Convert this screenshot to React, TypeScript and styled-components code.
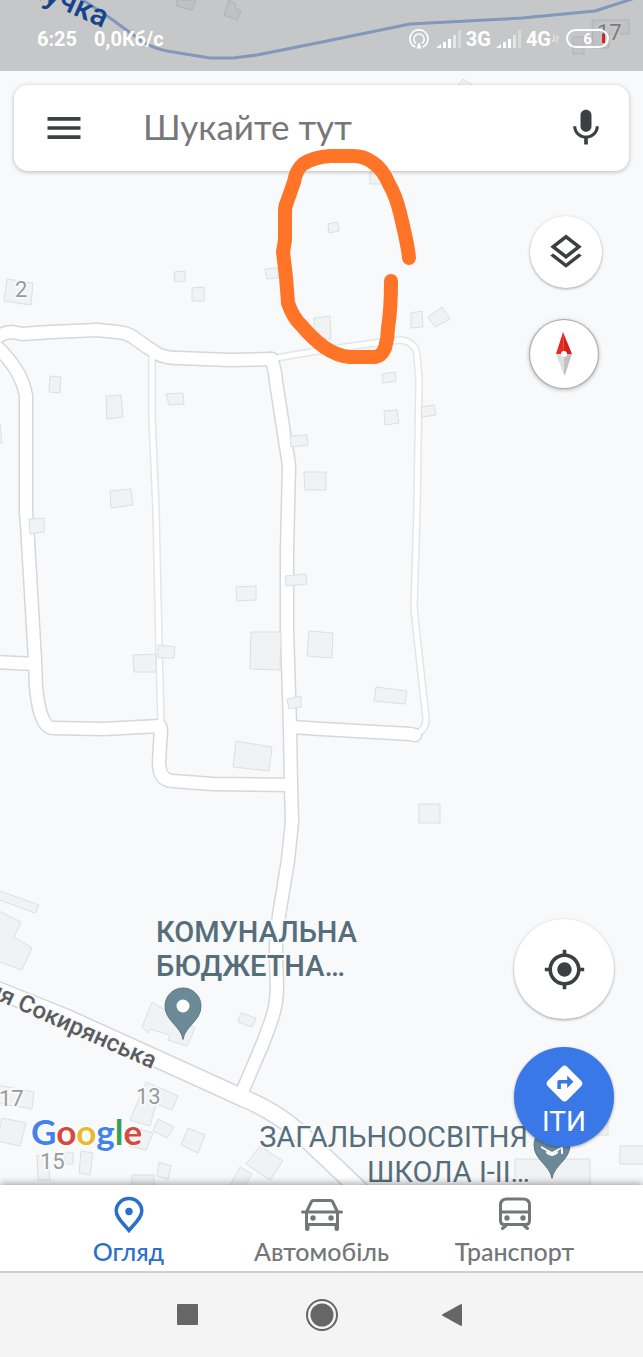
import React from "react";
import styled, { createGlobalStyle } from "styled-components";
import { MdDirections, MdMenu, MdMic, MdMyLocation, MdOutlineLayers } from "react-icons/md";

const GlobalStyle = createGlobalStyle`
  *, *::before, *::after { box-sizing: border-box; }
  body { margin: 0; background: #f8f9fb; font-family: Roboto, "Noto Sans", sans-serif; }
  button, input { font: inherit; }
`;

const Screen = styled.div`
  display: flex;
  flex-direction: column;
  min-height: 100vh;
`;

const MapArea = styled.main`
  position: relative;
  flex: 1;
  display: flex;
  flex-direction: column;
  overflow: hidden;
  background: #f8f9fb;
`;

const Canvas = styled.svg`
  position: absolute;
  inset: 0;
  width: 100%;
  height: 100%;
  display: block;
`;

const Annotation = styled(Canvas)`
  pointer-events: none;
`;

const StatusBar = styled.header`
  position: relative;
  display: flex;
  align-items: center;
  justify-content: space-between;
  height: 71px;
  padding: 6px 34px 0 37px;
  background: rgba(0, 0, 0, 0.2);
  color: #fff;
  font-size: 20px;
  line-height: 24px;
  font-weight: 700;
`;

const StatusGroup = styled.div<{ $gap: number }>`
  display: flex;
  align-items: center;
  gap: ${(p) => p.$gap}px;
`;

const Battery = styled.span`
  position: relative;
  display: flex;
  align-items: center;
  justify-content: center;
  width: 43px;
  height: 19px;
  border: 2px solid #fff;
  border-radius: 10px;
  font-size: 15px;
  line-height: 16px;

  &::after {
    content: "";
    position: absolute;
    right: 2px;
    top: 3px;
    width: 3px;
    height: 9px;
    background: #d3202a;
  }
`;

const SearchBar = styled.form`
  position: relative;
  display: flex;
  align-items: center;
  height: 86px;
  margin: 14px 14px 0;
  padding: 0 21px 0 28px;
  background: #fff;
  border-radius: 14px;
  box-shadow: 0 1px 4px rgba(60, 64, 67, 0.35);
`;

const IconButton = styled.button`
  display: flex;
  align-items: center;
  justify-content: center;
  flex: none;
  padding: 0;
  border: 0;
  background: none;
  color: #3c4043;
`;

const SearchInput = styled.input`
  flex: 1;
  min-width: 0;
  height: 48px;
  margin-left: 57px;
  padding: 0 0 4px;
  border: 0;
  outline: 0;
  background: none;
  color: #202124;
  font-family: Lato, "Noto Sans", sans-serif;
  font-size: 35px;

  &::placeholder { color: #757779; opacity: 1; }
`;

const TopControls = styled.div`
  position: relative;
  align-self: flex-end;
  display: flex;
  flex-direction: column;
  gap: 32px;
  margin: 45px 41px 0 0;
`;

const BottomControls = styled.div`
  position: relative;
  align-self: flex-end;
  display: flex;
  flex-direction: column;
  gap: 28px;
  margin: auto 29px 38px 0;
`;

const RoundButton = styled(IconButton)<{ $size: number; $outlined?: boolean; $primary?: boolean }>`
  flex-direction: column;
  width: ${(p) => p.$size}px;
  height: ${(p) => p.$size}px;
  padding-top: ${(p) => (p.$primary ? 6 : 0)}px;
  border-radius: 50%;
  background: ${(p) => (p.$primary ? "#3b78e7" : "#fff")};
  color: ${(p) => (p.$primary ? "#fff" : "#3c4043")};
  box-shadow: ${(p) =>
    p.$outlined
      ? "0 0 0 1px #a9a9a9, 0 1px 5px rgba(0, 0, 0, 0.4)"
      : "0 1px 3px rgba(0, 0, 0, 0.35)"};
  font-size: 28px;
  line-height: 34px;
`;

const TabBar = styled.nav`
  position: relative;
  display: grid;
  grid-template-columns: repeat(3, 1fr);
  height: 88px;
  padding: 0 32px;
  background: #fff;
  border-bottom: 2px solid #cfcfcf;
  box-shadow: 0 -1px 8px rgba(0, 0, 0, 0.4);
`;

const Tab = styled.button<{ $active?: boolean }>`
  display: flex;
  flex-direction: column;
  align-items: center;
  gap: 1px;
  padding: 10px 0 0;
  border: 0;
  background: none;
  color: ${(p) => (p.$active ? "#2a6fcb" : "#747678")};
  font-family: Lato, "Noto Sans", sans-serif;
  font-size: 25px;
  line-height: 30px;
  font-weight: 500;
`;

const SystemBar = styled.footer`
  position: relative;
  display: flex;
  align-items: center;
  justify-content: center;
  gap: 98px;
  height: 84px;
  background: #f4f4f4;
`;

const SystemButton = styled(IconButton)`
  width: 34px;
  height: 34px;
  color: #666;
`;

const ROADS = [
  "M-6 340Q2 332 13 332L22 334L50 332L97 330L117 332Q127 333 133 337L147 347L158 354Q166 358 178 358L230 360L272 359",
  "M-4 346Q22 370 26 396V512L27 524L35 660L36 687Q40 728 53 728L103 729L160 726",
  "M-4 662L34 664",
  "M161 729L159 762Q159 780 172 781L213 784L291 785",
  "M271 359Q275 368 276 382L283 427L289 465L287 550L287 630L290 727L291 787L292 822L288 860L282 897Q275 935 276 960L277 985Q277 1006 270 1024L263 1043L243 1090",
  "M291 727L322 729L410 734L415 735",
];

const LANES = [
  "M152 356V417L156 510L159 647L161 724",
  "M276 358L317 351L375 343L400 340Q415 341 417 355L419 380L417 510L414 607L417 637L426 718Q427 729 415 735",
];

const STREET = "M-8 988L67 1018L197 1077L243 1098Q275 1111 300 1133L360 1190";

const BUILDINGS = [
  "176 0L196 0L192 10L177 6Z",
  "229 0L236 4L235 8L241 11L237 20L224 15Z",
  "592 20H629V34H609V48H593Z",
  "573 37H584V54H573Z",
  "457 86L463 79L472 85V90H457Z",
  "7 279L33 283L31 305L4 301Z",
  "174 272L185 271V281L175 282Z",
  "192 288L204 287V301H192Z",
  "265 269L278 268V278L267 279Z",
  "328 224L338 222L339 231L329 233Z",
  "370 172H381V184H370Z",
  "314 318L330 316L331 339H314Z",
  "411 313L422 311L423 327L411 328Z",
  "428 317L442 307L450 319L435 327Z",
  "50 376L61 377L60 393L49 392Z",
  "106 396L121 395L123 417L107 419Z",
  "0 424L2 443L-3 444V424Z",
  "166 394L183 393L184 404L169 405Z",
  "110 491L131 489L133 505L111 508Z",
  "290 436L307 435L308 445L291 447Z",
  "304 472H326V490H305Z",
  "382 374L395 372L396 381L383 383Z",
  "384 411L397 410L399 423L385 425Z",
  "421 407L434 405L436 415L422 417Z",
  "29 519L44 518V532L30 534Z",
  "285 576L306 574L307 584L286 586Z",
  "236 587L256 586V600L237 601Z",
  "251 632H281L280 670L250 669Z",
  "309 631L333 633L332 658L307 656Z",
  "133 655L156 654V672H134Z",
  "158 645L175 647L174 658H158Z",
  "287 699L301 696V707L289 709Z",
  "376 687L407 691L405 704L374 701Z",
  "236 741L272 747L269 771L233 767Z",
  "419 804H440V823H419Z",
  "-3 890L39 905L35 913L-3 899Z",
  "-3 910L21 922L14 937L32 948L22 970L-3 961Z",
  "152 1002L195 1028L187 1046L168 1040L170 1035L150 1029L148 1033L142 1027Z",
  "241 1013L256 1018L252 1027L238 1022Z",
  "-3 1085L34 1092L32 1109L-3 1103Z",
  "146 1082L178 1096L172 1110L156 1104L150 1126L130 1120Z",
  "2 1118L26 1123L20 1146L-3 1141Z",
  "158 1119L174 1127L167 1138L153 1131Z",
  "135 1128L153 1133L146 1150L130 1146Z",
  "188 1128L205 1135L198 1153L181 1145Z",
  "37 1155L48 1157L50 1180L38 1180Z",
  "65 1153H73V1164H65Z",
  "81 1151L93 1153L90 1175L79 1173Z",
  "159 1162L171 1166L168 1179L157 1176Z",
  "132 1175H154V1190H132Z",
  "260 1146L283 1161L270 1180L246 1164Z",
  "240 1167L252 1174L242 1190H228Z",
  "590 1120H608V1135H590Z",
  "515 1159H590V1190H515Z",
  "620 1146H648V1164H620Z",
];

type LabelKind = "poi" | "school" | "number" | "street" | "water";

const LABEL_SIZE: Record<LabelKind, number> = { poi: 29, school: 29, number: 22, street: 24, water: 31 };
const LABEL_WEIGHT: Record<LabelKind, number> = { poi: 500, school: 400, number: 400, street: 500, water: 500 };
const LABEL_COLOR: Record<LabelKind, string> = {
  poi: "#566e7a",
  school: "#566e7a",
  number: "#999a9c",
  street: "#5a5c5e",
  water: "#1c55ae",
};

const MapText = styled.text<{ $kind: LabelKind }>`
  font-family: Roboto, "Noto Sans", sans-serif;
  font-size: ${(p) => LABEL_SIZE[p.$kind]}px;
  font-weight: ${(p) => LABEL_WEIGHT[p.$kind]};
  fill: ${(p) => LABEL_COLOR[p.$kind]};
  stroke: ${(p) => (p.$kind === "water" ? "none" : "#f8f9fb")};
  stroke-width: 4px;
  stroke-linejoin: round;
  paint-order: stroke;
`;

const LogoText = styled.text`
  font-family: Lato, sans-serif;
  font-size: 35px;
  font-weight: 700;
  stroke: #fff;
  stroke-width: 2px;
  paint-order: stroke;
`;

const PIN = "M0 33.5C-2 20-18 15-18 0A18 18 0 0 1 18 0C18 15 2 20 0 33.5Z";

function MapCanvas() {
  return (
    <Canvas viewBox="0 0 643 1185" preserveAspectRatio="xMidYMid slice" role="img" aria-label="Карта">
      <g fill="none" strokeLinejoin="round" strokeLinecap="round">
        <g stroke="#e4e5e7" strokeWidth={8}>{LANES.map((d) => <path key={d} d={d} />)}</g>
        <g stroke="#d6d7da" strokeWidth={15}>{ROADS.map((d) => <path key={d} d={d} />)}</g>
        <path d={STREET} stroke="#d6d7da" strokeWidth={19} />
        <g stroke="#fff" strokeWidth={5}>{LANES.map((d) => <path key={d} d={d} />)}</g>
        <g stroke="#fff" strokeWidth={12}>{ROADS.map((d) => <path key={d} d={d} />)}</g>
        <path d={STREET} stroke="#fff" strokeWidth={16} />
        <path
          d="M80 -2L110 18L143 42Q153 48 167 51L210 58H233L257 55L322 42L410 24L522 18L595 11L632 -1"
          stroke="#a2bdea"
          strokeWidth={3}
        />
      </g>
      <g fill="#f1f2f4" stroke="#dddee0" strokeWidth={1}>
        {BUILDINGS.map((d) => <path key={d} d={`M${d}`} />)}
      </g>

      <MapText $kind="water" textAnchor="end" transform="translate(103 28) rotate(24)">лучка</MapText>
      <MapText $kind="number" x={597} y={40}>17</MapText>
      <MapText $kind="number" x={15} y={297}>2</MapText>
      <MapText $kind="number" x={-1} y={1106}>17</MapText>
      <MapText $kind="number" x={136} y={1104}>13</MapText>
      <MapText $kind="number" x={40} y={1169}>15</MapText>
      <MapText $kind="street" textAnchor="end" transform="translate(152 1069) rotate(24)">ня Сокирянська</MapText>

      <MapText $kind="poi" x={156} y={942}>КОМУНАЛЬНА</MapText>
      <MapText $kind="poi" x={156} y={976}>БЮДЖЕТНА…</MapText>
      <MapText $kind="school" x={528} y={1147} textAnchor="end">ЗАГАЛЬНООСВІТНЯ</MapText>
      <MapText $kind="school" x={530} y={1182} textAnchor="end">ШКОЛА І-ІІ…</MapText>

      <g transform="translate(183 1006)">
        <path d={PIN} fill="#6b8997" stroke="#5d7987" />
        <circle r={6.5} fill="#fff" />
      </g>
      <g transform="translate(552 1145)">
        <path d={PIN} fill="#6b8997" stroke="#5d7987" />
        <path d="M-11 1L0 7L11 1V9H9V4L0 9L-11 3ZM-6 6L0 9L6 6V8Q0 14 -6 8Z" fill="#fff" />
      </g>

      <LogoText x={31} y={1145}>
        <tspan fill="#4382ec">G</tspan>
        <tspan fill="#d64b40">o</tspan>
        <tspan fill="#e8bb2c">o</tspan>
        <tspan fill="#4382ec">g</tspan>
        <tspan fill="#3c9d58">l</tspan>
        <tspan fill="#d64b40">e</tspan>
      </LogoText>
    </Canvas>
  );
}

function Signal() {
  return (
    <svg width="25" height="18" viewBox="0 0 25 18" fill="#fff" aria-hidden="true">
      <path d="M0 18L5 14V18ZM7 12H10V18H7ZM12 9H15V18H12Z" />
      <path d="M17 5H20V18H17Z" opacity=".55" />
      <path d="M22 0H25V18H22Z" opacity=".35" />
    </svg>
  );
}

function Hotspot() {
  return (
    <svg width="20" height="20" viewBox="0 0 20 20" fill="none" stroke="#fff" strokeWidth="1.6" aria-hidden="true">
      <path d="M6.300 18A9 9 0 1 1 13.700 18" />
      <path d="M7 14.500A5.200 5.200 0 1 1 13 14.500" />
      <path d="M10 13L12.600 19.500H7.400Z" fill="#fff" stroke="none" />
    </svg>
  );
}

function Compass() {
  return (
    <svg width="18" height="44" viewBox="0 0 18 44" aria-hidden="true">
      <path d="M8 0L9 22H1Z" fill="#e52a20" />
      <path d="M8 0L17 22H9Z" fill="#d41f1c" />
      <path d="M1 22H9V43Z" fill="#dedede" />
      <path d="M9 22H17L10 43H9Z" fill="#c2c2c2" />
      <circle cx="9" cy="22" r="3" fill="#fff" />
    </svg>
  );
}

function PlaceIcon() {
  return (
    <svg width="44" height="40" viewBox="0 0 44 40" fill="none" stroke="currentColor" strokeWidth="3.5" aria-hidden="true">
      <path d="M22 35.5C17 29 9.200 23 9.200 16A12.800 12.400 0 0 1 34.800 16C34.800 23 27 29 22 35.500Z" />
      <circle cx="22" cy="16.500" r="3.700" fill="currentColor" stroke="none" />
    </svg>
  );
}

function CarIcon() {
  return (
    <svg width="44" height="40" viewBox="0 0 44 40" fill="none" stroke="currentColor" strokeWidth="3" strokeLinecap="round" strokeLinejoin="round" aria-hidden="true">
      <path d="M6.500 34V17L11.500 6.500Q12 5.500 13.500 5.500H30.500Q32 5.500 32.500 6.500L37.500 17V34M2.500 17H41.500M7 29.500H37" />
      <path d="M7.500 30V34M36.500 30V34" strokeWidth="4" />
      <g fill="currentColor" stroke="none">
        <circle cx="13" cy="23" r="2.700" />
        <circle cx="31" cy="23" r="2.700" />
      </g>
    </svg>
  );
}

function TrainIcon() {
  return (
    <svg width="44" height="40" viewBox="0 0 44 40" fill="none" stroke="currentColor" strokeWidth="3" strokeLinecap="round" aria-hidden="true">
      <path d="M7.500 10Q7.500 4 14 4H30Q36.500 4 36.500 10V25.500Q36.500 29.500 32.500 29.500H11.500Q7.500 29.500 7.500 25.500ZM8 17H36M13 30.500L9.500 33.500M31 30.500L34.500 33.500" />
      <g fill="currentColor" stroke="none">
        <circle cx="14" cy="23" r="2.700" />
        <circle cx="30" cy="23" r="2.700" />
      </g>
    </svg>
  );
}

export default function App() {
  return (
    <Screen>
      <GlobalStyle />
      <MapArea>
        <MapCanvas />
        <StatusBar>
          <StatusGroup $gap={17}>
            <span>6:25</span>
            <span>0,0Кб/с</span>
          </StatusGroup>
          <StatusGroup $gap={7}>
            <Hotspot />
            <StatusGroup $gap={5}>
              <Signal />
              <span>3G</span>
              <Signal />
              <StatusGroup $gap={1}>
                <span>4G</span>
                <svg width="7" height="8" viewBox="0 0 7 8" stroke="#fff" fill="none" opacity=".7" aria-hidden="true">
                  <path d="M2 0V7L0 5M5 8V1L7 3" />
                </svg>
              </StatusGroup>
            </StatusGroup>
            <Battery>6</Battery>
          </StatusGroup>
        </StatusBar>

        <SearchBar role="search">
          <IconButton type="button" aria-label="Меню">
            <MdMenu size={44} />
          </IconButton>
          <SearchInput type="text" placeholder="Шукайте тут" aria-label="Шукайте тут" />
          <IconButton type="button" aria-label="Голосовий пошук">
            <MdMic size={44} />
          </IconButton>
        </SearchBar>

        <TopControls>
          <RoundButton $size={72} type="button" aria-label="Шари">
            <MdOutlineLayers size={42} />
          </RoundButton>
          <RoundButton $size={68} $outlined type="button" aria-label="Компас">
            <Compass />
          </RoundButton>
        </TopControls>

        <BottomControls>
          <RoundButton $size={100} type="button" aria-label="Моє місцезнаходження">
            <MdMyLocation size={43} />
          </RoundButton>
          <RoundButton $size={100} $primary type="button">
            <MdDirections size={43} aria-hidden="true" />
            ІТИ
          </RoundButton>
        </BottomControls>

        <Annotation viewBox="0 0 643 1185" preserveAspectRatio="xMidYMid slice" aria-hidden="true">
          <path
            d="M409 258C408 245 404 230 400 213Q396 196 389 184Q383 169 372 162Q364 156 353 156H330Q314 157 303 164Q296 170 294 182L287 202Q285 206 285 212V240L283 252L286 277L288 303Q293 318 302 326Q312 338 324 347Q337 356 350 357H374Q381 357 385 348Q388 338 388 328Q391 310 391 281"
            fill="none"
            stroke="#ff7426"
            strokeWidth={14}
            strokeLinecap="round"
            strokeLinejoin="round"
          />
        </Annotation>
      </MapArea>

      <TabBar>
        <Tab $active type="button" aria-current="page">
          <PlaceIcon />
          Огляд
        </Tab>
        <Tab type="button">
          <CarIcon />
          Автомобіль
        </Tab>
        <Tab type="button">
          <TrainIcon />
          Транспорт
        </Tab>
      </TabBar>

      <SystemBar>
        <SystemButton type="button" aria-label="Останні програми">
          <svg width="34" height="34" viewBox="0 0 34 34" fill="currentColor">
            <rect x="4" y="6" width="21" height="21" rx="1" />
          </svg>
        </SystemButton>
        <SystemButton type="button" aria-label="Головний екран">
          <svg width="34" height="34" viewBox="0 0 34 34" fill="currentColor">
            <circle cx="17" cy="17" r="15" fill="none" stroke="currentColor" strokeWidth="2" />
            <circle cx="17" cy="17" r="11.500" />
          </svg>
        </SystemButton>
        <SystemButton type="button" aria-label="Назад">
          <svg width="34" height="34" viewBox="0 0 34 34" fill="currentColor" stroke="currentColor" strokeWidth="2" strokeLinejoin="round">
            <path d="M6 17L24 7V27Z" />
          </svg>
        </SystemButton>
      </SystemBar>
    </Screen>
  );
}
